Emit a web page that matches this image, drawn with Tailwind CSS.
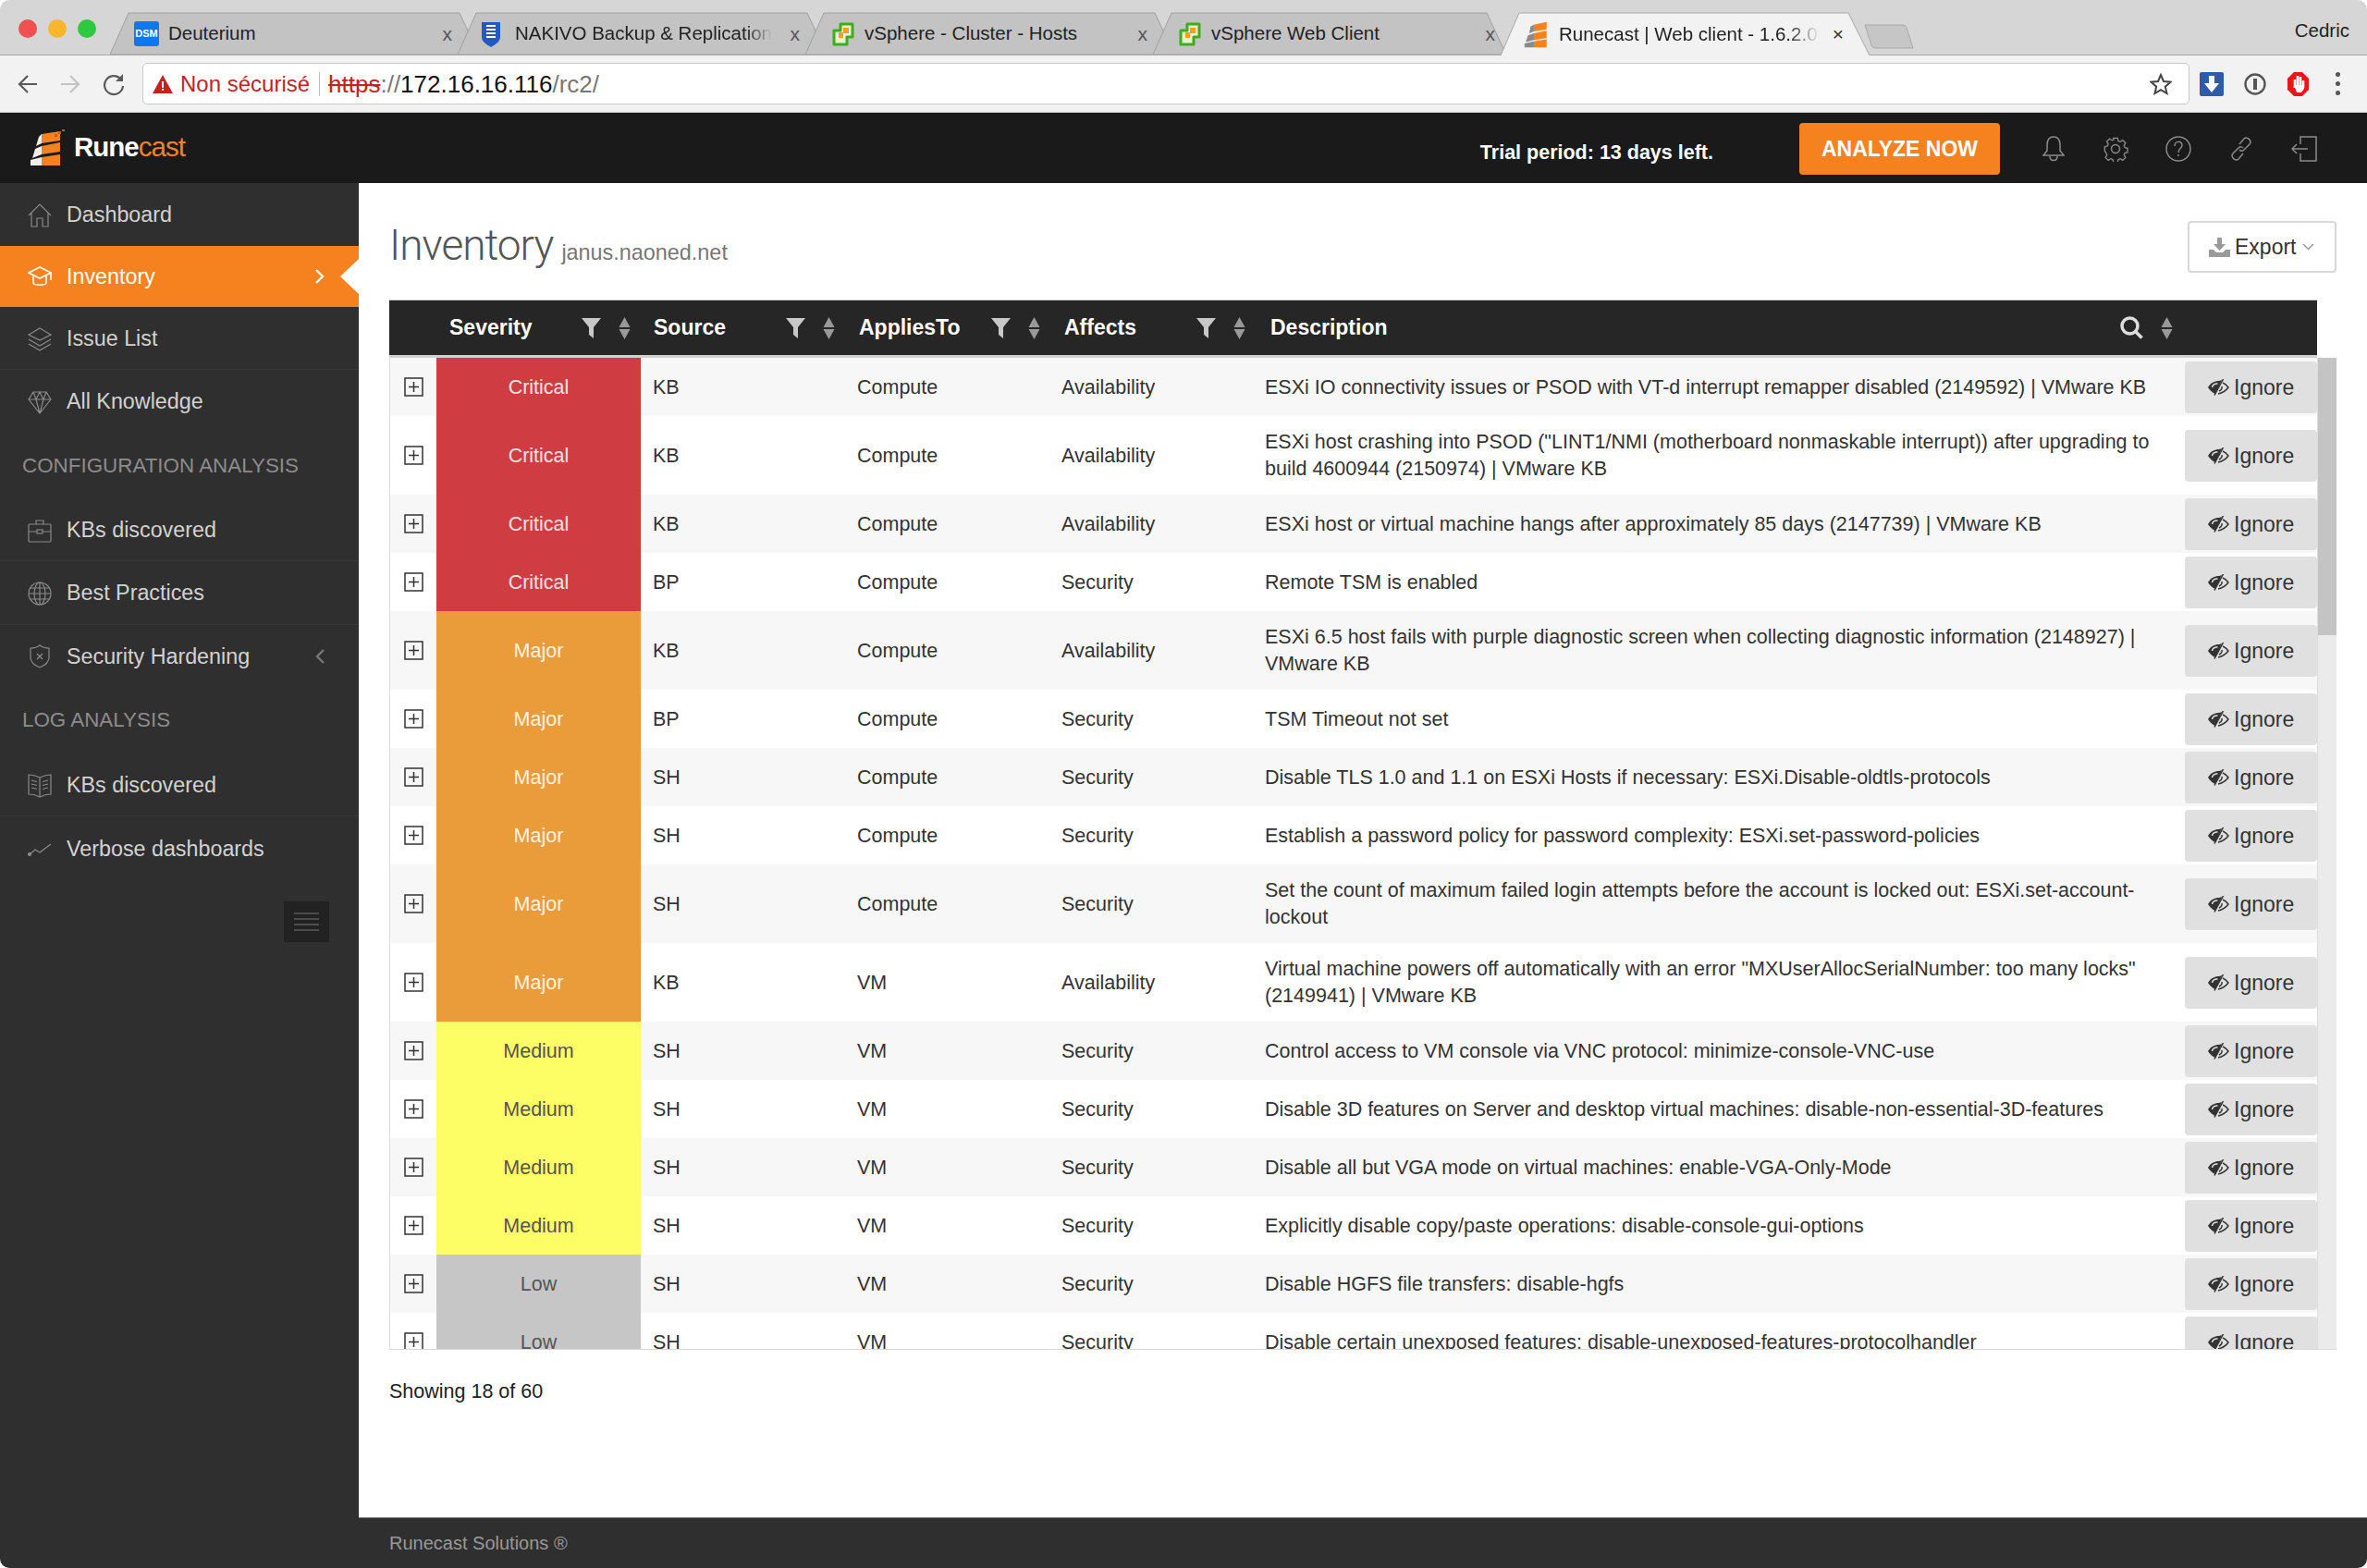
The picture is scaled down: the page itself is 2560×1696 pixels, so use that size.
<!DOCTYPE html>
<html lang="en">
<head>
  <meta charset="UTF-8">
  <title>Runecast | Web client</title>
  <script src="https://cdn.jsdelivr.net/npm/@tailwindcss/browser@4"></script>
</head>
<body class="bg-white font-['Liberation_Sans',Arial,sans-serif]">
<div class="w-[2560px] h-[1696px] overflow-hidden rounded-[10px] flex flex-col">

  <!-- browser tab strip -->
  <div class="h-[60px] bg-[#d6d6d6] border-b border-[#a8a8a8] relative flex items-end pl-[119px] shrink-0" id="tabstrip">
    <div class="absolute left-[20px] top-[21px] flex gap-[12px]">
      <span class="w-[20px] h-[20px] rounded-full bg-[#f0504f]"></span>
      <span class="w-[20px] h-[20px] rounded-full bg-[#f8b62d]"></span>
      <span class="w-[20px] h-[20px] rounded-full bg-[#2fc840]"></span>
    </div>

    <div class="relative w-[399px] h-[46px] -mr-[23px] flex items-center pl-[26px] pr-[29px] pt-[1px] shrink-0">
      <svg class="absolute inset-0" width="399" height="46"><path d="M0 46 L20 1 H378 L399 46Z" fill="#c3c3c3" stroke="#a0a0a0"/></svg>
      <span class="relative w-[27px] h-[27px] bg-[#0f78ef] rounded-[3px] text-white text-[11px] font-bold leading-[27px] text-center">DSM</span>
      <span class="relative ml-[10px] text-[20.5px] text-[#222] flex-1 overflow-hidden whitespace-nowrap">Deuterium</span>
      <span class="relative text-[21px] text-[#555]">x</span>
    </div>

    <div class="relative w-[399px] h-[46px] -mr-[23px] flex items-center pl-[25px] pr-[29px] pt-[1px] shrink-0">
      <svg class="absolute inset-0" width="399" height="46"><path d="M0 46 L20 1 H378 L399 46Z" fill="#c3c3c3" stroke="#a0a0a0"/></svg>
      <svg class="relative" width="22" height="28" viewBox="0 0 22 28"><path d="M1 1h20v16c0 5-5 8-10 11C6 25 1 22 1 17Z" fill="#2459c4"/><path d="M6 5h10M6 9h10M6 13h10M6 17h10" stroke="#fff" stroke-width="2"/></svg>
      <span class="relative ml-[15px] text-[20.5px] text-[#222] w-[278px] overflow-hidden whitespace-nowrap [mask-image:linear-gradient(90deg,#000_90%,transparent)]">NAKIVO Backup &amp; Replication</span>
      <span class="relative ml-auto text-[21px] text-[#555]">x</span>
    </div>

    <div class="relative w-[399px] h-[46px] -mr-[23px] flex items-center pl-[29px] pr-[29px] pt-[1px] shrink-0">
      <svg class="absolute inset-0" width="399" height="46"><path d="M0 46 L20 1 H378 L399 46Z" fill="#c3c3c3" stroke="#a0a0a0"/></svg>
      <svg class="relative" width="24" height="26" viewBox="0 0 24 26"><path d="M9 2h13v14h-6v8H2V9h7Z" fill="#e8f0d8" stroke="#3fae1c" stroke-width="3" stroke-linejoin="round"/><path d="M12 6h6v6h-6v5H7v-6h5Z" fill="#f3a01c"/></svg>
      <span class="relative ml-[11px] text-[20.5px] text-[#222] flex-1 whitespace-nowrap">vSphere - Cluster - Hosts</span>
      <span class="relative text-[21px] text-[#555]">x</span>
    </div>

    <div class="relative w-[382px] h-[46px] -mr-[6px] flex items-center pl-[28px] pr-[12px] pt-[1px] shrink-0">
      <svg class="absolute inset-0" width="382" height="46"><path d="M0 46 L20 1 H361 L382 46Z" fill="#c3c3c3" stroke="#a0a0a0"/></svg>
      <svg class="relative" width="24" height="26" viewBox="0 0 24 26"><path d="M9 2h13v14h-6v8H2V9h7Z" fill="#e8f0d8" stroke="#3fae1c" stroke-width="3" stroke-linejoin="round"/><path d="M12 6h6v6h-6v5H7v-6h5Z" fill="#f3a01c"/></svg>
      <span class="relative ml-[11px] text-[20.5px] text-[#222] flex-1 whitespace-nowrap">vSphere Web Client</span>
      <span class="relative text-[21px] text-[#555]">x</span>
    </div>

    <div class="relative w-[399px] h-[47px] -mb-px flex items-center pl-[25px] pr-[28px] pt-[1px] shrink-0">
      <svg class="absolute inset-0" width="399" height="47"><path d="M0 47 L20 1 H376 L399 47" fill="#f2f2f2" stroke="#a8a8a8"/></svg>
      <svg class="relative" width="27" height="29" viewBox="0 0 37 40"><path d="M10 8l5-3V15L8 18ZM6 21l9-3v10L3 31ZM1 33l14-3v9H1Z" fill="#8a8a8a"/><path d="M15 5L34 1V12L15 15ZM15 18l19-4V25L15 28ZM15 30l19-3V39H15Z" fill="#f6821f"/></svg>
      <span class="relative ml-[11px] text-[20.5px] text-[#222] w-[282px] overflow-hidden whitespace-nowrap [mask-image:linear-gradient(90deg,#000_88%,transparent)]">Runecast | Web client - 1.6.2.0</span>
      <span class="relative ml-auto text-[21px] text-[#333]">×</span>
    </div>

    <svg class="ml-[-6px] mb-[6px] shrink-0" width="54" height="27"><path d="M1 1 H42 Q45 1 46 4 L53 26 H12 Q9 26 8 23Z" fill="#c6c6c6" stroke="#a8a8a8"/></svg>
    <span class="absolute right-[19px] top-[21px] text-[20.5px] leading-[24px] text-[#222]">Cedric</span>
  </div>

  <!-- browser toolbar -->
  <div class="h-[62px] bg-[#f2f2f2] border-b border-[#c8c8c8] flex items-center pl-[19px] shrink-0">
    <svg width="22" height="22" viewBox="0 0 22 22" fill="none" stroke="#5a5a5a" stroke-width="2.2"><path d="M21 11H2M11 2l-9 9 9 9"/></svg>
    <svg class="ml-[24px]" width="22" height="22" viewBox="0 0 22 22" fill="none" stroke="#c4c4c4" stroke-width="2.2"><path d="M1 11h19M11 2l9 9-9 9"/></svg>
    <svg class="ml-[24px]" width="24" height="26" viewBox="0 0 24 26" fill="none" stroke="#5a5a5a" stroke-width="2.2"><path d="M20 8a10 10 0 1 0 2 7"/><path d="M22 2v8h-8Z" fill="#5a5a5a" stroke="none"/></svg>
    <div class="ml-[19px] w-[2214px] h-[45px] bg-white border border-[#c9c9c9] rounded-[5px] flex items-center pl-[10px] pr-[18px]">
      <svg width="22" height="20" viewBox="0 0 22 20"><path d="M11 0L22 20H0Z" fill="#c5221f"/><path d="M10 7h2v7h-2zM10 15h2v2h-2z" fill="#fff"/></svg>
      <span class="ml-[8px] text-[24px] text-[#c5221f] whitespace-nowrap">Non sécurisé</span>
      <span class="ml-[10px] w-px h-[26px] bg-[#bbb]"></span>
      <span class="ml-[9px] mt-[1px] text-[26px] whitespace-nowrap text-[#777]"><span class="text-[#c5221f] line-through">https</span>://<span class="text-[#111]">172.16.16.116</span>/rc2/</span>
      <svg class="ml-auto" width="24" height="24" viewBox="0 0 24 24" fill="none" stroke="#444" stroke-width="2"><path d="M12 2l3 7 7.5.7-5.700 5 1.700 7.300-6.500-3.900L5.500 22l1.700-7.300-5.700-5L9 9Z"/></svg>
    </div>
    <div class="ml-[11px] w-[26px] h-[26px] bg-[#2f5ba8] rounded-[2px] flex items-center justify-center">
      <svg width="16" height="18" viewBox="0 0 16 18"><path d="M5 0h6v8h5l-8 10-8-10h5Z" fill="#fff"/></svg>
    </div>
    <svg class="ml-[22px]" width="24" height="24" viewBox="0 0 24 24" fill="none" stroke="#555" stroke-width="2.4"><circle cx="12" cy="12" r="10.500"/><path d="M12 6v12" stroke-width="4"/></svg>
    <svg class="ml-[22px]" width="25" height="28" viewBox="0 0 25 28"><path d="M8 1h9l7 7v12l-7 7H8l-7-7V8Z" fill="#e8151d"/><path d="M9 18V9M12 17V5M15 17V6M18 18V10" stroke="#fff" stroke-width="2.600"/><path d="M8 15h11v4l-3 4H11Z" fill="#fff"/></svg>
    <div class="ml-[28px] flex flex-col gap-[5px]">
      <span class="w-[5px] h-[5px] rounded-full bg-[#555]"></span>
      <span class="w-[5px] h-[5px] rounded-full bg-[#555]"></span>
      <span class="w-[5px] h-[5px] rounded-full bg-[#555]"></span>
    </div>
  </div>

  <!-- app header -->
  <header class="h-[76px] bg-[#1a1a1a] flex items-center pl-[33px] shrink-0">
    <svg width="39" height="40" viewBox="0 0 39 40"><path d="M9 8l3-3V15L6 18ZM5 21l7-3v9L2 31ZM0 33l12-3v9H0Z" fill="#eee"/><path d="M12 5L32 2V12L12 15ZM12 18l20-4V24L12 27ZM12 30l20-3V39H12Z" fill="#f6821f"/><path d="M26 5h3v3h-3ZM30 2h3v3h-3ZM34 0h3v2h-3Z" fill="#b8621a"/></svg>
    <span class="ml-[8px] mb-[2px] text-[29.5px] tracking-[-1px] text-white font-bold">Rune<span class="text-[#f6821f] font-normal">cast</span></span>
    <span class="ml-[1401px] text-[21.5px] font-bold text-white whitespace-nowrap mt-[10px]">Trial period: 13 days left.</span>
    <button class="ml-[93px] mt-[1px] pb-[0px] pt-[2px] w-[217px] h-[56px] bg-[#f6821f] rounded-[4px] text-white text-[23px] font-bold">ANALYZE NOW</button>
    <svg class="ml-[46px] mt-[2px]" width="24" height="28" viewBox="0 0 24 28" fill="none" stroke="#8a8a8a" stroke-width="1.500"><path d="M12 1c5 0 7 4 7 9v6l4 5H1l4-5v-6c0-5 2-9 7-9Z"/><path d="M8 22c0 6 8 6 8 0"/></svg>
    <svg class="ml-[41px] mt-[2px]" width="28" height="28" viewBox="0 0 28 28" fill="none" stroke="#8a8a8a" stroke-width="1.500"><circle cx="14" cy="14" r="4.500"/><path d="M11.500 1h5l.8 3.500 2.400 1 3-1.900 3.400 3.400-1.900 3 1 2.400 3.300.8v5l-3.300.8-1 2.400 1.900 3-3.400 3.400-3-1.900-2.400 1-.8 3.300h-5l-.8-3.300-2.400-1-3 1.900-3.400-3.400 1.900-3-1-2.400L1 16.500v-5l3.300-.8 1-2.400-1.900-3 3.400-3.400 3 1.900 2.400-1Z" transform="translate(1.400 1.400) scale(.9)"/></svg>
    <svg class="ml-[40px] mt-[2px]" width="28" height="28" viewBox="0 0 28 28" fill="none" stroke="#8a8a8a" stroke-width="1.500"><circle cx="14" cy="14" r="13"/><path d="M10 11c0-6 8-6 8-1 0 4-4 3-4 8M14 20v2"/></svg>
    <svg class="ml-[40px] mt-[2px]" width="28" height="28" viewBox="0 0 28 28" fill="none" stroke="#8a8a8a" stroke-width="1.500"><path d="M12 9l5-6c3-3 9 2 6 6l-6 6c-2 2-4 1-5 0M16 19l-5 6c-3 3-9-2-6-6l6-6c2-2 4-1 5 0"/></svg>
    <svg class="ml-[40px] mt-[2px]" width="28" height="28" viewBox="0 0 28 28" fill="none" stroke="#8a8a8a" stroke-width="1.500"><path d="M10 9V1h17v26H10v-8M18 14H1M6 9l-5 5 5 5"/></svg>
  </header>

  <div class="flex-1 flex min-h-0">
    <!-- sidebar -->
    <aside class="w-[388px] bg-[#2f2f2f] shrink-0 text-[23.3px] text-[#d2d2d2] flex flex-col">
      <a class="h-[68px] flex items-center pl-[30px] gap-[16px] pt-[1px]">
        <svg width="26" height="26" viewBox="0 0 26 26" fill="none" stroke="#8a8a8a" stroke-width="1.200"><path d="M1 13L13 1l12 12M4 10v15h6v-9h6v9h6V10"/></svg>Dashboard</a>
      <a class="h-[66px] flex items-center pl-[30px] gap-[16px] bg-[#f6821f] text-white relative">
        <svg width="26" height="26" viewBox="0 0 26 26" fill="none" stroke="#fff" stroke-width="1.600"><path d="M13 3L1 9l12 6 12-6ZM6 12v8c0 3 14 3 14 0v-8M25 9v8"/></svg>Inventory
        <svg class="ml-auto mr-[37px]" width="10" height="16" viewBox="0 0 10 16" fill="none" stroke="#fff" stroke-width="2.400"><path d="M1 1l7 7-7 7"/></svg>
        <span class="absolute right-0 top-[14px] border-y-[19px] border-y-transparent border-r-[20px] border-r-white"></span>
      </a>
      <a class="h-[68px] flex items-center pl-[30px] gap-[16px] pt-[2px] border-b border-[#383838]">
        <svg width="26" height="26" viewBox="0 0 26 26" fill="none" stroke="#8a8a8a" stroke-width="1.200"><path d="M13 1l12 7-12 6L1 8ZM1 13l12 7 12-7M1 18l12 7 12-7"/></svg>Issue List</a>
      <a class="h-[67px] flex items-center pl-[30px] gap-[16px] pt-[2px]">
        <svg width="26" height="26" viewBox="0 0 26 26" fill="none" stroke="#8a8a8a" stroke-width="1.200"><path d="M6 2h14l5 8-12 15L1 10ZM1 10h24M6 2l3 8 4-8 4 8 3-8M9 10l4 15 4-15"/></svg>All Knowledge</a>
      <div class="h-[71px] flex items-center pl-[24px] pt-[2px] text-[22.4px] text-[#8c8c8c]">CONFIGURATION ANALYSIS</div>
      <a class="h-[69px] flex items-center pl-[30px] gap-[16px] pt-[3px] border-b border-[#383838]">
        <svg width="26" height="26" viewBox="0 0 26 26" fill="none" stroke="#8a8a8a" stroke-width="1.200"><rect x="1" y="6" width="24" height="19" rx="1"/><path d="M9 6V2h8v4M1 14h9M16 14h9"/><rect x="10" y="12" width="6" height="4"/></svg>KBs discovered</a>
      <a class="h-[69px] flex items-center pl-[30px] gap-[16px] pt-[1px] border-b border-[#383838]">
        <svg width="26" height="26" viewBox="0 0 26 26" fill="none" stroke="#8a8a8a" stroke-width="1.200"><circle cx="13" cy="13" r="12"/><ellipse cx="13" cy="13" rx="6" ry="12"/><path d="M1 13h24M3 7h20M3 19h20M13 1v24"/></svg>Best Practices</a>
      <a class="h-[68px] flex items-center pl-[30px] gap-[16px]">
        <svg width="26" height="26" viewBox="0 0 26 26" fill="none" stroke="#8a8a8a" stroke-width="1.200"><path d="M13 1c3 2.500 6 3 10 3v10c0 6-5 9-10 11-5-2-10-5-10-11V4c4 0 7-.5 10-3ZM10 10l6 6M16 10l-6 6"/></svg>Security Hardening
        <svg class="ml-auto mr-[37px]" width="10" height="16" viewBox="0 0 10 16" fill="none" stroke="#777" stroke-width="2.400"><path d="M9 1L2 8l7 7"/></svg>
      </a>
      <div class="h-[70px] flex items-center pl-[24px] text-[22.4px] text-[#8c8c8c]">LOG ANALYSIS</div>
      <a class="h-[69px] flex items-center pl-[30px] gap-[16px] pt-[3px] border-b border-[#383838]">
        <svg width="26" height="26" viewBox="0 0 26 26" fill="none" stroke="#8a8a8a" stroke-width="1.200"><path d="M13 4C9 2 5 1 1 1v21c4 0 8 1 12 3 4-2 8-3 12-3V1c-4 0-8 1-12 3ZM13 4v21M4 7l6 1.500M4 11l6 1.500M4 15l6 1.500M22 7l-6 1.500M22 11l-6 1.500M22 15l-6 1.500"/></svg>KBs discovered</a>
      <a class="h-[68px] flex items-center pl-[30px] gap-[16px] pt-[2px]">
        <svg width="26" height="26" viewBox="0 0 26 26" fill="none" stroke="#8a8a8a" stroke-width="1.200"><path d="M1 20l7-6 5 3 12-9"/><circle cx="2" cy="19" r="1.500" fill="#8a8a8a"/></svg>Verbose dashboards</a>
      <div class="mt-[24px] mr-[32px] self-end w-[49px] h-[44px] bg-[#222] flex flex-col items-center justify-center gap-[4px]">
        <span class="w-[27px] h-[2px] bg-[#4c4c4c]"></span>
        <span class="w-[27px] h-[2px] bg-[#4c4c4c]"></span>
        <span class="w-[27px] h-[2px] bg-[#4c4c4c]"></span>
        <span class="w-[27px] h-[2px] bg-[#4c4c4c]"></span>
      </div>
    </aside>

    <!-- main -->
    <main class="flex-1 flex flex-col min-w-0 bg-white">
      <div class="flex-1 pl-[33px] pr-[33px] pt-[41px]">
        <div class="flex items-start justify-between h-[56px]">
          <div class="flex items-baseline mt-[2px]">
            <h1 class="text-[46px] leading-[48px] font-light text-[#555] font-['Roboto',sans-serif] tracking-[-1px]">Inventory</h1>
            <span class="ml-[9px] text-[23.4px] text-[#777]">janus.naoned.net</span>
          </div>
          <button class="w-[161px] h-[56px] border-2 border-[#d8d8d8] rounded-[4px] flex items-center pl-[21px] text-[23px] text-[#333]">
            <svg width="23" height="21" viewBox="0 0 23 21" fill="#9a9a9a"><path d="M9 0h5v7h4l-6.500 7L5 7h4ZM0 13h5l3 3h7l3-3h5v8H0Z"/></svg>
            <span class="ml-[5px]">Export</span>
            <svg class="ml-[7px]" width="13" height="8" viewBox="0 0 13 8" fill="none" stroke="#999" stroke-width="1.500"><path d="M1 1l5.500 5.500L12 1"/></svg>
          </button>
        </div>

        <!-- table head -->
        <div class="mt-[29px] w-[2085px] h-[63px] border-t border-[#ccc] border-b-[3px] border-b-[#d0d0d0] bg-[#262626] grid grid-cols-[51px_221px_221px_221px_220px_1008px_143px] items-center text-[23px] font-bold text-white">
          <div></div>
          <div class="flex items-center pl-[14px]"><span class="flex-1">Severity</span><svg class="mr-[18px]" width="21" height="22" viewBox="0 0 21 22" fill="#c8c8c8"><path d="M0 0h21l-8 10v12l-5-4v-8Z"/></svg><svg class="mr-[10px]" width="15" height="24" viewBox="0 0 15 24" fill="#999"><path d="M7.500 0l6 11h-12ZM7.500 24l-6-11h12Z"/></svg></div>
          <div class="flex items-center pl-[14px]"><span class="flex-1">Source</span><svg class="mr-[18px]" width="21" height="22" viewBox="0 0 21 22" fill="#c8c8c8"><path d="M0 0h21l-8 10v12l-5-4v-8Z"/></svg><svg class="mr-[10px]" width="15" height="24" viewBox="0 0 15 24" fill="#999"><path d="M7.500 0l6 11h-12ZM7.500 24l-6-11h12Z"/></svg></div>
          <div class="flex items-center pl-[15px]"><span class="flex-1">AppliesTo</span><svg class="mr-[18px]" width="21" height="22" viewBox="0 0 21 22" fill="#c8c8c8"><path d="M0 0h21l-8 10v12l-5-4v-8Z"/></svg><svg class="mr-[9px]" width="15" height="24" viewBox="0 0 15 24" fill="#999"><path d="M7.500 0l6 11h-12ZM7.500 24l-6-11h12Z"/></svg></div>
          <div class="flex items-center pl-[16px]"><span class="flex-1">Affects</span><svg class="mr-[18px]" width="21" height="22" viewBox="0 0 21 22" fill="#c8c8c8"><path d="M0 0h21l-8 10v12l-5-4v-8Z"/></svg><svg class="mr-[7px]" width="15" height="24" viewBox="0 0 15 24" fill="#999"><path d="M7.500 0l6 11h-12ZM7.500 24l-6-11h12Z"/></svg></div>
          <div class="flex items-center pl-[19px]"><span class="flex-1">Description</span><svg class="mr-[18px]" width="25" height="25" viewBox="0 0 25 25" fill="none" stroke="#ddd" stroke-width="3.500"><circle cx="10.500" cy="10.500" r="8.500"/><path d="M16.500 16.500L23.500 23.500"/></svg><svg class="mr-[12px]" width="15" height="24" viewBox="0 0 15 24" fill="#999"><path d="M7.500 0l6 11h-12ZM7.500 24l-6-11h12Z"/></svg></div>
          <div></div>
        </div>

        <!-- table body -->
        <div class="flex h-[1073px] border-b border-[#d8d8d8]">
          <div id="rows" class="w-[2085px] overflow-hidden border-l border-[#ddd] text-[21.5px] text-[#333]"></div>
          <div class="flex-1 bg-[#ebebeb] border-l border-[#ddd]">
            <div class="h-[300px] bg-[#c4c4c4]"></div>
          </div>
        </div>

        <p class="mt-[32px] text-[21.5px] leading-[26px] text-[#222]">Showing 18 of 60</p>
      </div>

      <footer class="h-[55px] bg-[#2f2f2f] border-t border-[#8a8a8a] flex items-center pl-[33px] pb-[1px] text-[20px] text-[#999] shrink-0">Runecast Solutions ®</footer>
    </main>
  </div>
</div>

<script>
  const severityClass = {
    Critical: 'bg-[#cf3c42] text-[#f6e3e3]',
    Major: 'bg-[#ea9b3a] text-[#fff3e0]',
    Medium: 'bg-[#fdfd66] text-[#555]',
    Low: 'bg-[#c6c6c6] text-[#555]'
  };

  const rows = [
    ['Critical', 'KB', 'Compute', 'Availability', 'ESXi IO connectivity issues or PSOD with VT-d interrupt remapper disabled (2149592) | VMware KB'],
    ['Critical', 'KB', 'Compute', 'Availability', 'ESXi host crashing into PSOD ("LINT1/NMI (motherboard nonmaskable interrupt)) after upgrading to<br>build 4600944 (2150974) | VMware KB'],
    ['Critical', 'KB', 'Compute', 'Availability', 'ESXi host or virtual machine hangs after approximately 85 days (2147739) | VMware KB'],
    ['Critical', 'BP', 'Compute', 'Security', 'Remote TSM is enabled'],
    ['Major', 'KB', 'Compute', 'Availability', 'ESXi 6.5 host fails with purple diagnostic screen when collecting diagnostic information (2148927) |<br>VMware KB'],
    ['Major', 'BP', 'Compute', 'Security', 'TSM Timeout not set'],
    ['Major', 'SH', 'Compute', 'Security', 'Disable TLS 1.0 and 1.1 on ESXi Hosts if necessary: ESXi.Disable-oldtls-protocols'],
    ['Major', 'SH', 'Compute', 'Security', 'Establish a password policy for password complexity: ESXi.set-password-policies'],
    ['Major', 'SH', 'Compute', 'Security', 'Set the count of maximum failed login attempts before the account is locked out: ESXi.set-account-<br>lockout'],
    ['Major', 'KB', 'VM', 'Availability', 'Virtual machine powers off automatically with an error "MXUserAllocSerialNumber: too many locks"<br>(2149941) | VMware KB'],
    ['Medium', 'SH', 'VM', 'Security', 'Control access to VM console via VNC protocol: minimize-console-VNC-use'],
    ['Medium', 'SH', 'VM', 'Security', 'Disable 3D features on Server and desktop virtual machines: disable-non-essential-3D-features'],
    ['Medium', 'SH', 'VM', 'Security', 'Disable all but VGA mode on virtual machines: enable-VGA-Only-Mode'],
    ['Medium', 'SH', 'VM', 'Security', 'Explicitly disable copy/paste operations: disable-console-gui-options'],
    ['Low', 'SH', 'VM', 'Security', 'Disable HGFS file transfers: disable-hgfs'],
    ['Low', 'SH', 'VM', 'Security', 'Disable certain unexposed features: disable-unexposed-features-protocolhandler']
  ];

  const eye = `<svg width="24" height="18" viewBox="0 0 24 18"><path d="M1 9C4 4 8 2 13 2L16 1 9 16C6 15 3 12 1 9Z" fill="#333"/><path d="M5.500 9c0-2.500 3-4.500 6-4" fill="none" stroke="#e0e0e0" stroke-width="1.500"/><path d="M17.500 0L8 17.500" stroke="#333" stroke-width="1.500"/><path d="M17 4c2.500 1 4.500 3 6 5-2.500 3.500-6.500 6-11 7M16 8c.5 2-1 4-3 5" fill="none" stroke="#333" stroke-width="1.500"/></svg>`;

  document.getElementById('rows').innerHTML = rows.map((r, i) => `
    <div class="grid grid-cols-[50px_221px_221px_221px_220px_1008px_143px] items-center ${r[4].includes('<br>') ? 'h-[85px]' : 'h-[63px]'} ${i % 2 === 0 ? 'bg-[#f7f7f7]' : 'bg-white'}">
      <div class="flex justify-center">
        <svg width="21" height="21" viewBox="0 0 21 21" fill="none" stroke="#333" stroke-width="1.500"><rect x="1" y="1" width="19" height="19"/><path d="M10.500 5v11M5 10.500h11"/></svg>
      </div>
      <div class="h-full flex items-center justify-center pt-[1px] ${severityClass[r[0]]}">${r[0]}</div>
      <div class="pl-[13px] pt-[1px]">${r[1]}</div>
      <div class="pl-[13px] pt-[1px]">${r[2]}</div>
      <div class="pl-[13px] pt-[1px]">${r[3]}</div>
      <div class="pl-[13px] pt-[1px] leading-[29px] whitespace-nowrap">${r[4]}</div>
      <div class="h-[56px] bg-[#e0e0e0] rounded-[4px] flex items-center pl-[24px] pt-[1px] gap-[5px] text-[23px] text-[#333]">${eye}<span>Ignore</span></div>
    </div>`).join('');
</script>
</body>
</html>
